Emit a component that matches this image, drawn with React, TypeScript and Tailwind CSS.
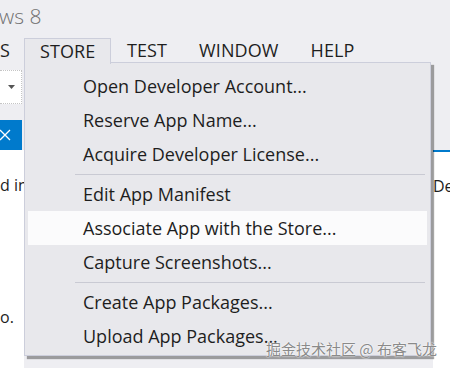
import { Fragment } from "react";

type MenuEntry = { label: string; highlighted?: boolean } | "separator";

const menuBar = [
  { label: "S", active: false },
  { label: "STORE", active: true },
  { label: "TEST", active: false },
  { label: "WINDOW", active: false },
  { label: "HELP", active: false },
];

const storeMenu: MenuEntry[] = [
  { label: "Open Developer Account..." },
  { label: "Reserve App Name..." },
  { label: "Acquire Developer License..." },
  "separator",
  { label: "Edit App Manifest" },
  { label: "Associate App with the Store...", highlighted: true },
  { label: "Capture Screenshots..." },
  "separator",
  { label: "Create App Packages..." },
  { label: "Upload App Packages..." },
];

export default function App() {
  return (
    <div
      className="relative h-[368px] w-[450px] overflow-hidden bg-[#eeeef2] text-[#1e1e1e]"
      style={{ fontFamily: '"Open Sans", "Noto Sans", sans-serif' }}
    >
      {/* window title, clipped on the left */}
      <div className="h-[38px] pt-[2px] text-[21px] leading-[28px] font-light text-[#717171]">
        <span className="-ml-[1px]">ws 8</span>
      </div>

      {/* menu bar */}
      <div className="relative z-20 flex h-[25px] items-stretch text-[18px] leading-[24px] tracking-[0.1px]">
        {menuBar.map((item) => (
          <div
            key={item.label}
            className={
              item.active
                ? "w-[87px] -mb-px border-x border-t border-[#cccedb] bg-[#e8e8ec] pl-[15px]"
                : item.label === "S"
                  ? "w-[24px]"
                  : "px-4"
            }
          >
            {item.label}
          </div>
        ))}
      </div>

      {/* background document area */}
      <div className="flex h-[305px]">
        <div className="flex w-[24px] flex-col">
          <div className="mt-[7px] flex h-[34px] w-[22px] items-center justify-center border-y border-r border-dotted border-[#c5c5c5] bg-white pl-[2px]">
            <svg width="7" height="4" viewBox="0 0 7 4">
              <path d="M0 0h7L3.5 4z" fill="#555" />
            </svg>
          </div>
          <div className="mt-[16px] flex h-[30px] w-[22px] items-center bg-[#007acc] text-white">
            <svg width="12" height="12" viewBox="0 0 12 12" className="-ml-[1px]">
              <path d="M1 1l10 10M11 1L1 11" stroke="#fff" strokeWidth="1.3" />
            </svg>
          </div>
          <div className="flex-1 bg-white text-[16px] leading-[22px]">
            <div className="mt-[24px] whitespace-nowrap">d in</div>
            <div className="mt-[110px] whitespace-nowrap">o.</div>
          </div>
        </div>
        <div className="flex-1" />
        <div className="flex w-[17px] flex-col pt-[87px]">
          <div className="h-[2px] bg-[#007acc]" />
          <div className="flex-1 bg-white text-[16px] leading-[22px]">
            <div className="mt-[23px] whitespace-nowrap">De</div>
          </div>
        </div>
      </div>

      {/* STORE dropdown */}
      <div className="absolute left-[24px] top-[62px] z-10 w-[407px] border border-[#cccedb] bg-[#e8e8ec] pt-[6px] pb-[2px] text-[18px] shadow-[3px_3px_1px_rgba(0,0,0,0.35)]">
        {storeMenu.map((entry, i) => (
          <Fragment key={i}>
            {entry === "separator" ? (
              <div className="flex h-[6px] items-center pl-[50px] pr-[5px]">
                <div className="h-px flex-1 bg-[#c9cad3]" />
              </div>
            ) : (
              <div
                className={
                  "mx-[3px] flex h-[34px] items-center pl-[55px] " +
                  (entry.highlighted ? "bg-[#fbfbfc]" : "")
                }
              >
                {entry.label}
              </div>
            )}
          </Fragment>
        ))}
      </div>

      {/* watermark */}
      <div
        className="absolute left-[266px] top-[338px] z-30 whitespace-nowrap text-[15px] text-[#8a8a8a]"
        style={{
          fontFamily: '"Noto Sans CJK SC", sans-serif',
          textShadow: "0 0 2px #fff, 0 0 1px #fff",
        }}
      >
        掘金技术社区 @ 布客飞龙
      </div>
    </div>
  );
}
